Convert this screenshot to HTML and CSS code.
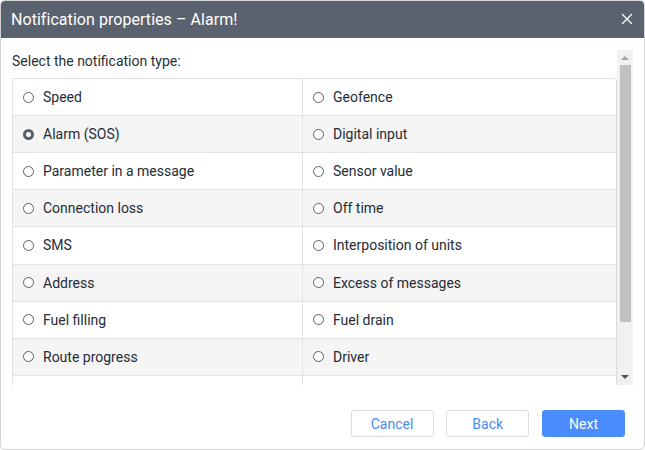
FILE: index.html
```html
<!DOCTYPE html>
<html>
<head>
<meta charset="utf-8">
<link rel="stylesheet" href="styles.css">
</head>
<body>
<div class="dialog">
  <div class="header">
    <span class="title">Notification properties – Alarm!</span>
    <svg class="close" width="12" height="12" viewBox="0 0 12 12"><path d="M1 1L11 11M11 1L1 11" stroke="#fff" stroke-width="1.3" fill="none"/></svg>
  </div>
  <div class="content">
    <div class="scroll">
      <div class="label">Select the notification type:</div>
      <div class="grid">
        <div class="row"><div class="cell left"><span class="radio"></span>Speed</div><div class="cell"><span class="radio"></span>Geofence</div></div>
        <div class="row alt"><div class="cell left"><span class="radio on"></span>Alarm (SOS)</div><div class="cell"><span class="radio"></span>Digital input</div></div>
        <div class="row"><div class="cell left"><span class="radio"></span>Parameter in a message</div><div class="cell"><span class="radio"></span>Sensor value</div></div>
        <div class="row alt"><div class="cell left"><span class="radio"></span>Connection loss</div><div class="cell"><span class="radio"></span>Off time</div></div>
        <div class="row"><div class="cell left"><span class="radio"></span>SMS</div><div class="cell"><span class="radio"></span>Interposition of units</div></div>
        <div class="row alt"><div class="cell left"><span class="radio"></span>Address</div><div class="cell"><span class="radio"></span>Excess of messages</div></div>
        <div class="row"><div class="cell left"><span class="radio"></span>Fuel filling</div><div class="cell"><span class="radio"></span>Fuel drain</div></div>
        <div class="row alt"><div class="cell left"><span class="radio"></span>Route progress</div><div class="cell"><span class="radio"></span>Driver</div></div>
        <div class="row"><div class="cell left"></div><div class="cell"></div></div>
      </div>
    </div>
    <div class="scrollbar">
      <div class="arrow up"></div>
      <div class="thumb"></div>
      <div class="spacer"></div>
      <div class="arrow down"></div>
    </div>
  </div>
  <div class="footer">
    <button class="btn">Cancel</button>
    <button class="btn">Back</button>
    <button class="btn primary">Next</button>
  </div>
</div>
</body>
</html>
```
FILE: styles.css
```css
* { box-sizing: border-box; }
html, body { margin: 0; padding: 0; background: #fff; }
body { font-family: Roboto, "Liberation Sans", sans-serif; }
.dialog {
  width: 645px; height: 450px;
  border: 1px solid #d4d4d4;
  border-radius: 5px;
  overflow: hidden;
  display: flex; flex-direction: column;
  background: #fff;
}
.header {
  height: 38px; flex: none;
  background: #5b626f;
  display: flex; align-items: center; justify-content: space-between;
  padding: 0 12px 0 11px;
  margin: -1px -1px 0 -1px;
}
.title { color: #fff; font-size: 16px; letter-spacing: 0.05px; }
.close { display: block; }
.content {
  margin: 12px 11px 0 11px;
  height: 335px; flex: none;
  display: flex;
}
.scroll { flex: 1; overflow: hidden; }
.label { font-size: 14px; color: #2a2f3a; height: 28px; padding-top: 3px; }
.grid {
  border: 1px solid #e1e1e1;
  border-right: 1px solid #dcdcdc;
  border-radius: 0 3px 0 0;
}
.row { display: flex; height: 37.14px; border-bottom: 1px solid #e3e3e3; }
.row:first-child { height: 37px; }
.row.alt { background: #f5f5f5; }
.cell {
  flex: 1; display: flex; align-items: center;
  font-size: 14px; color: #262b36;
  padding-left: 10px;
}
.cell.left { flex: none; width: 290px; border-right: 1px solid #e3e3e3; }
.radio {
  width: 11px; height: 11px; border-radius: 50%;
  border: 1px solid #5a5f6a;
  margin-right: 9px; flex: none;
  background: #fff;
}
.radio.on { background: #fff; border: 3px solid #5a5f6a; }
.scrollbar {
  width: 16px; flex: none;
  background: #f1f1f1;
  display: flex; flex-direction: column; align-items: center;
}
.arrow { width: 0; height: 0; border-left: 4px solid transparent; border-right: 4px solid transparent; }
.arrow.up { border-bottom: 4px solid #a3a3a3; margin: 6px 0 5px; }
.arrow.down { border-top: 4px solid #505050; margin: 5px 0 6px; }
.thumb { width: 11px; height: 257px; background: #c1c1c1; }
.spacer { flex: 1; }
.footer {
  flex: 1;
  display: flex; justify-content: flex-end; align-items: flex-start;
  padding: 25px 19px 0 0;
  gap: 12.75px;
}
.btn {
  font-family: Roboto, "Liberation Sans", sans-serif;
  font-size: 14px;
  width: 83px; height: 27px;
  border: 1px solid #dcdcdc; border-radius: 3px;
  background: #fff; color: #4a8af4;
  padding: 0;
}
.btn.primary { background: #4a8cfb; border-color: #4a8cfb; color: #fff; }
```
